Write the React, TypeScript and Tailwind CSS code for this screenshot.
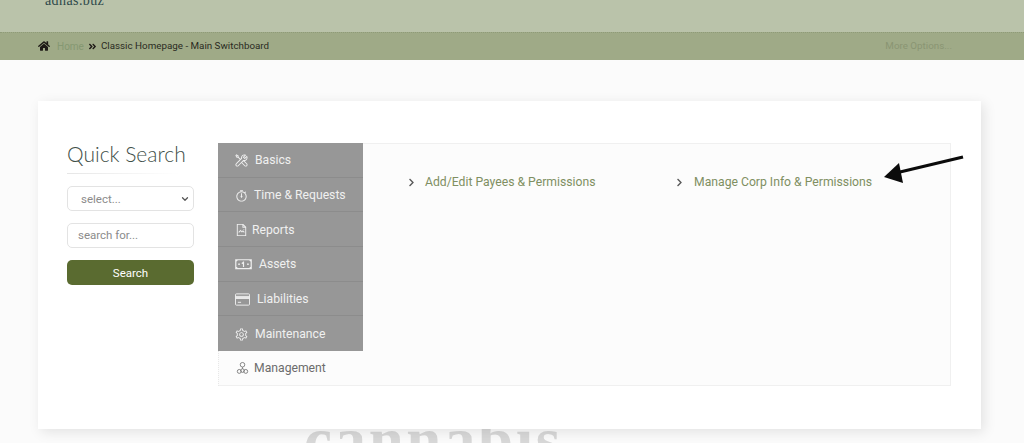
import { FaHome, FaAngleDoubleRight, FaChevronRight } from "react-icons/fa";
import { LiaToolsSolid, LiaStopwatchSolid, LiaFileImage, LiaMoneyBillAltSolid, LiaCogSolid } from "react-icons/lia";
import { ChevronDown } from "lucide-react";

const Card = ({ className = "" }: { className?: string }) => (
  <svg viewBox="0 0 16 13" className={className} fill="none" stroke="currentColor" strokeWidth="1">
    <rect x="0.5" y="0.5" width="15" height="12" rx="1" />
    <path d="M0.5 3.2h15M0.5 4.4h15M0.5 5.4h15" />
    <path d="M3 9.5h3.5" />
  </svg>
);

const Team = ({ className = "" }: { className?: string }) => (
  <svg viewBox="0 0 16 16" className={className} fill="none" stroke="currentColor" strokeWidth="1">
    <circle cx="8" cy="4" r="2.8" />
    <path d="M8 7v2" />
    <circle cx="4" cy="12.2" r="2.4" />
    <circle cx="12" cy="12.2" r="2.4" />
    <circle cx="8" cy="11.2" r="2.2" />
  </svg>
);

const items = [
  { label: "Basics", Icon: LiaToolsSolid, gap: "gap-[6px]", pl: "pl-[16px]", size: "w-[15px] h-[15px]" },
  { label: "Time & Requests", Icon: LiaStopwatchSolid, gap: "gap-[5px]", pl: "pl-[16px]", size: "w-[15px] h-[15px]" },
  { label: "Reports", Icon: LiaFileImage, gap: "gap-[3px]", pl: "pl-[16px]", size: "w-[15px] h-[16px]" },
  { label: "Assets", Icon: LiaMoneyBillAltSolid, gap: "gap-[6px]", pl: "pl-[16px]", size: "w-[19px] h-[19px]" },
  { label: "Liabilities", Icon: Card, gap: "gap-[7px]", pl: "pl-[17px]", size: "w-[15px] h-[13px]" },
  { label: "Maintenance", Icon: LiaCogSolid, gap: "gap-[6px]", pl: "pl-[16px]", size: "w-[15px] h-[15px]" },
];

const roboto = "font-['Roboto',sans-serif]";

export default function App() {
  return (
    <div className={`relative h-[443px] w-[1024px] overflow-hidden bg-[#fbfbfb] ${roboto}`}>
      <header className="h-[32px] overflow-hidden bg-[#bac3aa]">
        <div className="ml-[45px] -mt-[7px] font-['Liberation_Serif',serif] text-[14px] leading-[15px] tracking-[0.4px] text-[#2f4a4a]">
          adhas.buz
        </div>
      </header>
      <div className="flex h-[28px] items-center justify-between border-t border-dotted border-[#8f9b78] bg-[#9faa87] pl-[38px] pr-[72px] text-[9.8px]">
        <div className="flex items-center">
          <FaHome className="h-[12px] w-[12px] -translate-y-px text-[#1e1a16]" />
          <span className="ml-[7px] text-[10px] text-[#859872]">Home</span>
          <FaAngleDoubleRight className="ml-[4px] h-[9px] w-[9px] text-[#1e1a16]" />
          <span className="ml-[4px] text-[#2a2a22]">Classic Homepage - Main Switchboard</span>
        </div>
        <span className="text-[#8a9573]">More Options...</span>
      </div>

      <main className="relative z-10 ml-[38px] mt-[41px] flex h-[328px] w-[943px] bg-white pl-[29px] pt-[42px] shadow-[3px_3px_12px_rgba(0,0,0,0.1)]">
        <aside className="w-[127px]">
          <h2 className="font-['Lato',sans-serif] text-[21px] font-light leading-[22px] text-[#3f5049]">Quick Search</h2>
          <div className="mt-[8px] h-px w-[112px] bg-gradient-to-r from-[#e6e6e6] to-white" />
          <div className="mt-[12px] flex h-[25px] items-center justify-between rounded-[5px] border border-[#e3e3e3] pl-[13px] pr-[3px] text-[11.5px] text-[#8b8b8b]">
            <span className="translate-y-px">select...</span>
            <ChevronDown className="h-[10px] w-[10px] text-[#555]" strokeWidth={3} />
          </div>
          <div className="mt-[12px] flex h-[25px] items-center rounded-[5px] border border-[#e3e3e3] pl-[10px] text-[11.5px] text-[#8b8b8b]">
            search for...
          </div>
          <button className="mt-[12px] h-[25px] w-full rounded-[5px] bg-[#5a6b30] text-[11.5px] text-white">
            <span className="inline-block translate-y-px">Search</span>
          </button>
        </aside>

        <section className="ml-[24px] flex h-[243px] w-[733px] border-b border-r border-t border-[#f0f0f0] bg-[#fcfcfc]">
          <nav className="-mt-px w-[145px] shrink-0">
            {items.map(({ label, Icon, gap, pl, size }, i) => (
              <div
                key={label}
                className={`flex h-[34.7px] items-center pt-px ${gap} ${pl} bg-[#979797] text-[12.2px] text-[#f0f0f0] ${
                  i < 5 ? "border-b border-[#8c8c8c]" : ""
                }`}
              >
                <Icon className={size} />
                {label}
              </div>
            ))}
            <div className="flex h-[34.7px] items-center gap-[5px] border-l border-dotted border-[#e8e8e8] pl-[17px] text-[12.2px] text-[#6c6c6c]">
              <Team className="h-[14px] w-[13px]" />
              Management
            </div>
          </nav>
          <div className="flex pl-[45px] pt-[30px] text-[12.2px] leading-[16px] text-[#7f8f62]">
            <div className="flex w-[268px] items-start">
              <FaChevronRight className="mt-[4px] h-[9px] w-[7px] text-[#5a5a5a]" />
              <span className="ml-[10px]">Add/Edit Payees &amp; Permissions</span>
            </div>
            <div className="flex items-start">
              <FaChevronRight className="mt-[4px] h-[9px] w-[7px] text-[#5a5a5a]" />
              <span className="ml-[11px]">Manage Corp Info &amp; Permissions</span>
            </div>
          </div>
        </section>
      </main>

      <div className="absolute left-[304px] top-[407px] font-['Liberation_Serif',serif] text-[63px] font-bold leading-[66px] tracking-[2.6px] text-[#d8d8d8]">
        cannabis
      </div>

      <svg className="absolute left-[880px] top-[150px] z-20 h-[40px] w-[90px]" viewBox="0 0 90 40">
        <path d="M83 7 L20 22" stroke="#0b0b0b" strokeWidth="3.2" fill="none" />
        <path d="M4 27 L19 13 L23 33 Z" fill="#0b0b0b" />
      </svg>
    </div>
  );
}
